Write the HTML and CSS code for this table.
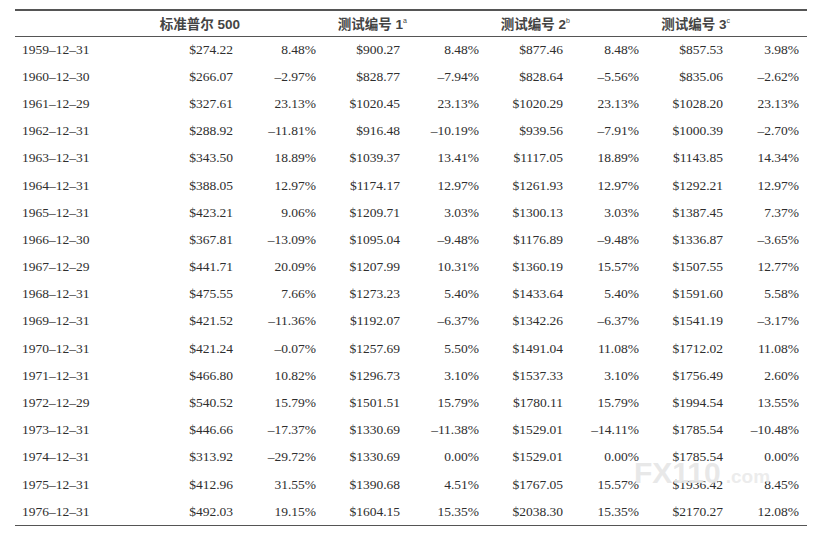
FILE: index.html
```html
<!DOCTYPE html>
<html lang="zh">
<head>
<meta charset="utf-8">
<title>测试结果</title>
<link rel="stylesheet" href="styles.css">
</head>
<body>
<div class="page">
<table class="data">
<colgroup>
<col class="c-date"><col class="c-usd"><col class="c-pct"><col class="c-usd1"><col class="c-pct2"><col class="c-usd1"><col class="c-pct3"><col class="c-usd1"><col class="c-pct3">
</colgroup>
<thead>
<tr>
<th></th>
<th class="h">标准普尔 500</th><th></th>
<th class="h">测试编号 1<sup>a</sup></th><th></th>
<th class="h">测试编号 2<sup>b</sup></th><th></th>
<th class="h">测试编号 3<sup>c</sup></th><th></th>
</tr>
</thead>
<tbody>
<tr><td>1959–12–31</td><td>$274.22</td><td>8.48%</td><td>$900.27</td><td>8.48%</td><td>$877.46</td><td>8.48%</td><td>$857.53</td><td>3.98%</td></tr>
<tr><td>1960–12–30</td><td>$266.07</td><td>–2.97%</td><td>$828.77</td><td>–7.94%</td><td>$828.64</td><td>–5.56%</td><td>$835.06</td><td>–2.62%</td></tr>
<tr><td>1961–12–29</td><td>$327.61</td><td>23.13%</td><td>$1020.45</td><td>23.13%</td><td>$1020.29</td><td>23.13%</td><td>$1028.20</td><td>23.13%</td></tr>
<tr><td>1962–12–31</td><td>$288.92</td><td>–11.81%</td><td>$916.48</td><td>–10.19%</td><td>$939.56</td><td>–7.91%</td><td>$1000.39</td><td>–2.70%</td></tr>
<tr><td>1963–12–31</td><td>$343.50</td><td>18.89%</td><td>$1039.37</td><td>13.41%</td><td>$1117.05</td><td>18.89%</td><td>$1143.85</td><td>14.34%</td></tr>
<tr><td>1964–12–31</td><td>$388.05</td><td>12.97%</td><td>$1174.17</td><td>12.97%</td><td>$1261.93</td><td>12.97%</td><td>$1292.21</td><td>12.97%</td></tr>
<tr><td>1965–12–31</td><td>$423.21</td><td>9.06%</td><td>$1209.71</td><td>3.03%</td><td>$1300.13</td><td>3.03%</td><td>$1387.45</td><td>7.37%</td></tr>
<tr><td>1966–12–30</td><td>$367.81</td><td>–13.09%</td><td>$1095.04</td><td>–9.48%</td><td>$1176.89</td><td>–9.48%</td><td>$1336.87</td><td>–3.65%</td></tr>
<tr><td>1967–12–29</td><td>$441.71</td><td>20.09%</td><td>$1207.99</td><td>10.31%</td><td>$1360.19</td><td>15.57%</td><td>$1507.55</td><td>12.77%</td></tr>
<tr><td>1968–12–31</td><td>$475.55</td><td>7.66%</td><td>$1273.23</td><td>5.40%</td><td>$1433.64</td><td>5.40%</td><td>$1591.60</td><td>5.58%</td></tr>
<tr><td>1969–12–31</td><td>$421.52</td><td>–11.36%</td><td>$1192.07</td><td>–6.37%</td><td>$1342.26</td><td>–6.37%</td><td>$1541.19</td><td>–3.17%</td></tr>
<tr><td>1970–12–31</td><td>$421.24</td><td>–0.07%</td><td>$1257.69</td><td>5.50%</td><td>$1491.04</td><td>11.08%</td><td>$1712.02</td><td>11.08%</td></tr>
<tr><td>1971–12–31</td><td>$466.80</td><td>10.82%</td><td>$1296.73</td><td>3.10%</td><td>$1537.33</td><td>3.10%</td><td>$1756.49</td><td>2.60%</td></tr>
<tr><td>1972–12–29</td><td>$540.52</td><td>15.79%</td><td>$1501.51</td><td>15.79%</td><td>$1780.11</td><td>15.79%</td><td>$1994.54</td><td>13.55%</td></tr>
<tr><td>1973–12–31</td><td>$446.66</td><td>–17.37%</td><td>$1330.69</td><td>–11.38%</td><td>$1529.01</td><td>–14.11%</td><td>$1785.54</td><td>–10.48%</td></tr>
<tr><td>1974–12–31</td><td>$313.92</td><td>–29.72%</td><td>$1330.69</td><td>0.00%</td><td>$1529.01</td><td>0.00%</td><td>$1785.54</td><td>0.00%</td></tr>
<tr><td>1975–12–31</td><td>$412.96</td><td>31.55%</td><td>$1390.68</td><td>4.51%</td><td>$1767.05</td><td>15.57%</td><td>$1936.42</td><td>8.45%</td></tr>
<tr><td>1976–12–31</td><td>$492.03</td><td>19.15%</td><td>$1604.15</td><td>15.35%</td><td>$2038.30</td><td>15.35%</td><td>$2170.27</td><td>12.08%</td></tr>
</tbody>
</table>
<div class="watermark"><span class="wm-big">FX110</span><span class="wm-small">.com</span></div>
</div>
</body>
</html>
```

FILE: styles.css
```css
html, body {
  margin: 0;
  padding: 0;
  background: #ffffff;
}
.page {
  position: relative;
  width: 823px;
  height: 539px;
  padding-top: 9px;
  box-sizing: border-box;
}
.data {
  margin-left: 15px;
  width: 792px;
  border-collapse: collapse;
  table-layout: fixed;
  font-family: "Liberation Serif", "Times New Roman", serif;
  font-size: 13.5px;
  color: #2e2e2e;
  border-top: 2px solid #555;
  border-bottom: 1.5px solid #555;
}
.c-date { width: 143px; }
.c-usd { width: 83px; }
.c-pct { width: 83px; }
.c-usd1 { width: 84px; }
.c-pct2 { width: 79px; }
.c-pct3 { width: 76px; }
.data thead tr {
  height: 26px;
  border-bottom: 1.5px solid #555;
}
.data th {
  padding: 0 1px 0 0;
  text-align: right;
  font-family: "Liberation Sans", "Noto Sans CJK SC", sans-serif;
  font-weight: 700;
  font-size: 13.5px;
  color: #444;
  white-space: nowrap;
  overflow: visible;
}
.data th sup {
  font-size: 7px;
  font-weight: 400;
  vertical-align: 6px;
  line-height: 0;
}
.data tbody tr {
  height: 27.2px;
}
.data td {
  padding: 0 8px 0 0;
  text-align: right;
  white-space: nowrap;
}
.data td:first-child {
  text-align: left;
  padding-left: 7px;
}
.watermark {
  position: absolute;
  left: 634px;
  top: 456px;
  display: flex;
  align-items: baseline;
  gap: 5px;
  font-family: "Liberation Sans", Arial, sans-serif;
  font-weight: 700;
  color: rgba(230, 230, 230, 0.93);
  pointer-events: none;
}
.wm-big {
  font-size: 30px;
}
.wm-small {
  font-size: 19px;
  color: rgba(234, 234, 234, 0.9);
}
```
